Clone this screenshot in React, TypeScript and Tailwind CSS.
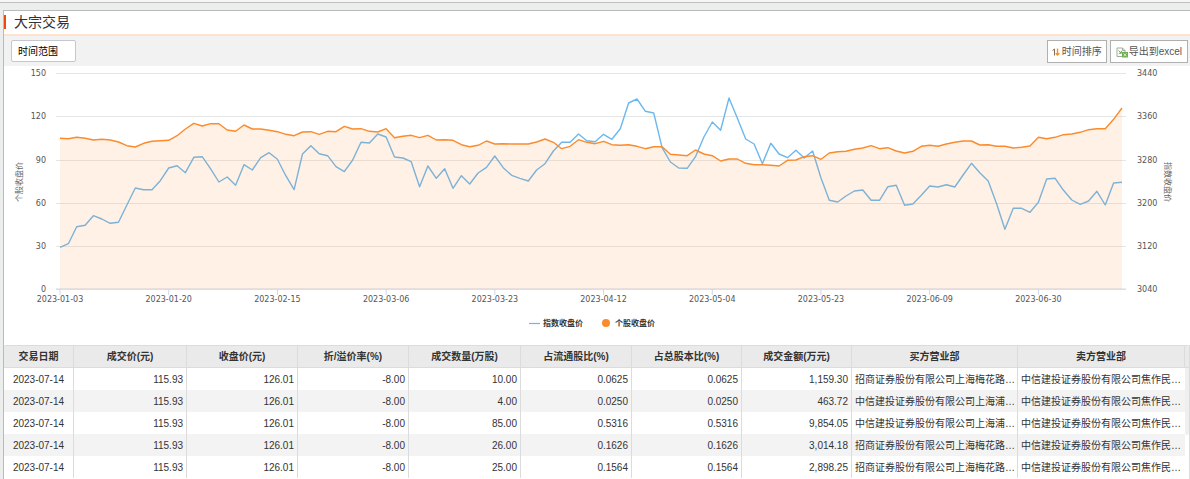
import React from "react";

type Trade = {
  date: string;
  price: string;
  close: string;
  premium: string;
  volume: string;
  floatRatio: string;
  totalRatio: string;
  amount: string;
  buyer: string;
  seller: string;
};

const MEIHUA = "招商证券股份有限公司上海梅花路…";
const PUDONG = "中信建投证券股份有限公司上海浦…";
const JIAOZUO = "中信建投证券股份有限公司焦作民…";

const base = { date: "2023-07-14", price: "115.93", close: "126.01", premium: "-8.00", seller: JIAOZUO };

const trades: Trade[] = [
  { ...base, volume: "10.00", floatRatio: "0.0625", totalRatio: "0.0625", amount: "1,159.30", buyer: MEIHUA },
  { ...base, volume: "4.00", floatRatio: "0.0250", totalRatio: "0.0250", amount: "463.72", buyer: PUDONG },
  { ...base, volume: "85.00", floatRatio: "0.5316", totalRatio: "0.5316", amount: "9,854.05", buyer: PUDONG },
  { ...base, volume: "26.00", floatRatio: "0.1626", totalRatio: "0.1626", amount: "3,014.18", buyer: MEIHUA },
  { ...base, volume: "25.00", floatRatio: "0.1564", totalRatio: "0.1564", amount: "2,898.25", buyer: MEIHUA },
];

const columns: { key: keyof Trade; title: string; width: string; align: string }[] = [
  { key: "date", title: "交易日期", width: "w-[70px]", align: "text-center" },
  { key: "price", title: "成交价(元)", width: "w-[113px]", align: "text-right" },
  { key: "close", title: "收盘价(元)", width: "w-[111px]", align: "text-right" },
  { key: "premium", title: "折/溢价率(%)", width: "w-[111px]", align: "text-right" },
  { key: "volume", title: "成交数量(万股)", width: "w-[112px]", align: "text-right" },
  { key: "floatRatio", title: "占流通股比(%)", width: "w-[111px]", align: "text-right" },
  { key: "totalRatio", title: "占总股本比(%)", width: "w-[110px]", align: "text-right" },
  { key: "amount", title: "成交金额(万元)", width: "w-[110px]", align: "text-right" },
  { key: "buyer", title: "买方营业部", width: "w-[166px]", align: "text-left" },
  { key: "seller", title: "卖方营业部", width: "w-[167px]", align: "text-left" },
];

// Series heights, measured downwards on the plot in thirds of a unit.
const stock = [
  145, 146, 142, 145, 150, 148, 150, 156, 167, 171, 160, 154, 152, 151, 137, 117, 100, 108, 101, 101, 120, 124, 105,
  117, 117, 121, 125, 133, 137, 126, 125, 133, 124, 125, 109, 117, 116, 124, 126, 116, 143, 139, 136, 143, 136, 150,
  149, 151, 164, 170, 166, 153, 162, 161, 162, 162, 162, 156, 147, 157, 176, 169, 149, 157, 161, 154, 164, 166, 164,
  169, 176, 170, 170, 193, 195, 197, 180, 192, 197, 213, 207, 207, 220, 224, 224, 226, 228, 211, 210, 200, 197, 208,
  189, 185, 184, 178, 174, 167, 176, 173, 183, 189, 184, 169, 166, 169, 162, 157, 153, 153, 165, 164, 169, 169, 174,
  172, 168, 142, 146, 142, 134, 132, 127, 119, 116, 116, 88, 54,
];
const index = [
  472, 461, 410, 406, 377, 387, 400, 397, 345, 294, 299, 299, 272, 234, 227, 248, 202, 200, 236, 276, 261, 286, 224,
  240, 203, 188, 208, 257, 299, 192, 167, 191, 197, 230, 245, 210, 157, 159, 132, 141, 201, 204, 215, 290, 228, 265,
  236, 295, 257, 282, 249, 232, 198, 233, 256, 265, 273, 240, 221, 183, 157, 157, 132, 152, 155, 133, 148, 116, 39,
  27, 64, 69, 173, 216, 234, 235, 200, 141, 96, 121, 24, 84, 147, 162, 221, 160, 192, 203, 181, 204, 183, 264, 331,
  336, 318, 303, 300, 331, 331, 290, 286, 346, 342, 316, 288, 291, 284, 291, 255, 220, 248, 273, 341, 418, 355, 355,
  367, 337, 267, 265, 301, 330, 343, 333, 304, 345, 279, 277,
];

const LEFT = 56;
const STEP = 1062 / 127;
const toPoints = (values: number[]) =>
  values.map((v, i) => `${(LEFT + i * STEP).toFixed(1)},${(24 + v / 3).toFixed(1)}`).join(" ");

const grid = [
  { y: 7, left: "150", right: "3440" },
  { y: 50, left: "120", right: "3360" },
  { y: 94, left: "90", right: "3280" },
  { y: 137, left: "60", right: "3200" },
  { y: 180, left: "30", right: "3120" },
  { y: 223, left: "0", right: "3040" },
];
const dates = [
  "2023-01-03", "2023-01-20", "2023-02-15", "2023-03-06", "2023-03-23",
  "2023-04-12", "2023-05-04", "2023-05-23", "2023-06-09", "2023-06-30",
];

function Chart() {
  const stockPoints = toPoints(stock);
  return (
    <svg
      viewBox="0 0 1186 279"
      className="block h-auto w-full font-['DejaVu_Sans','Noto_Sans_CJK_SC',sans-serif] text-[8px]"
      role="img"
      aria-label="个股收盘价 指数收盘价"
    >
      {grid.map((g) => (
        <line key={g.y} x1="52" x2="1122" y1={g.y + 0.5} y2={g.y + 0.5} stroke="#e6e6e6" />
      ))}
      {dates.map((d, i) => {
        const x = LEFT + i * 13 * STEP;
        return (
          <g key={d}>
            <line x1={x} x2={x} y1="223" y2="229" stroke="#ccd6eb" />
            <text x={x} y="236" textAnchor="middle" fill="#555">{d}</text>
          </g>
        );
      })}
      <line x1="52" x2="1122" y1="223" y2="223" stroke="#ccd6eb" />
      <polyline points={toPoints(index)} fill="none" stroke="#6cb8ee" strokeWidth="1.4" strokeLinejoin="round" />
      <polygon points={`56,223 ${stockPoints} 1118,223`} fill="#fb8b2c" fillOpacity="0.12" />
      <polyline points={stockPoints} fill="none" stroke="#fb8b2c" strokeWidth="1.4" strokeLinejoin="round" />
      {grid.map((g) => (
        <g key={g.left} fill="#555">
          <text x="42" y={g.y + 3} textAnchor="end">{g.left}</text>
          <text x="1133" y={g.y + 3}>{g.right}</text>
        </g>
      ))}
      <text transform="translate(18 116) rotate(-90)" textAnchor="middle" fill="#666">个股收盘价</text>
      <text transform="translate(1161 116) rotate(90)" textAnchor="middle" fill="#666">指数收盘价</text>
      <line x1="525" x2="536" y1="257.5" y2="257.5" stroke="#6cb8ee" strokeWidth="1.2" />
      <text x="539" y="260" fontWeight="bold" fill="#333">指数收盘价</text>
      <circle cx="602" cy="257" r="4" fill="#fb8b2c" />
      <text x="611" y="260" fontWeight="bold" fill="#333">个股收盘价</text>
    </svg>
  );
}

function SortIcon() {
  return (
    <svg viewBox="0 0 8 8" className="size-2" fill="none" aria-hidden="true">
      <path d="M0.5 2.5 2.5 1V7.5" stroke="#8b6a50" />
      <path d="M5.5 0.5V7M3.8 5.2 5.5 7 7.4 5.2" stroke="#f6931e" strokeWidth="1.4" />
    </svg>
  );
}

function ExcelIcon() {
  return (
    <svg viewBox="0 0 12 11" className="h-[11px] w-3" fill="none" aria-hidden="true">
      <path d="M6 9.5H1V1h5.5L9 3.5V5M6.5 1v2.5H9" stroke="#a3a9a0" />
      <path d="M2.5 3.5 5 6M5.3 3.8V6.3H2.8" stroke="#6aa84f" />
      <rect x="6" y="5" width="6" height="5.5" fill="#6eae50" />
      <path d="m7.5 6.3 3 3M10.5 6.3l-3 3" stroke="#e6f3df" strokeWidth="0.9" />
    </svg>
  );
}

export default function App() {
  return (
    <div className="flex min-h-screen flex-col overflow-hidden bg-[#eceeed] font-['Liberation_Sans','Noto_Sans_CJK_SC',sans-serif] text-[10px] text-[#333]">
      <div className="h-[3px] border-b border-[#bfbfbf] bg-[#f6f6f6]" />
      <main className="mt-[7px] ml-[3px] flex grow flex-col border-t border-l border-[#b9bbba] bg-white">
        <header className="flex h-[25px] items-center border-b-2 border-[#fde3cf] pb-0.5">
          <span className="h-3.5 w-0.5 bg-[#ee4a0a]" />
          <h1 className="ml-2 text-[14px] leading-5">大宗交易</h1>
        </header>
        <div className="flex h-[30px] items-center justify-between bg-[#f2f2f2] pr-0.5 pl-[7px]">
          <button className="h-[22px] w-[65px] rounded-xs border border-[#c6c6ce] bg-white pt-0.5 pl-1.5 text-left leading-4 text-black">
            时间范围
          </button>
          <div className="flex gap-[3px]">
            <button className="flex h-[23px] items-center gap-0.5 border border-[#b0b0b0] bg-white px-1 pt-0.5 leading-4 text-[#555]">
              <SortIcon />
              时间排序
            </button>
            <button className="flex h-[23px] items-center gap-px border border-[#b0b0b0] bg-white px-[5px] pt-0.5 leading-4 text-[#555]">
              <ExcelIcon />
              导出到excel
            </button>
          </div>
        </div>
        <Chart />
        <div className="flex grow">
          <div className="min-w-0 grow">
            <table className="w-full table-fixed border-separate border-spacing-0 whitespace-nowrap">
              <thead>
                <tr className="h-[23px] bg-[#eaeaea]">
                  {columns.map((c) => (
                    <th
                      key={c.key}
                      scope="col"
                      className={`${c.width} border-t border-r border-b border-[#dcdcdc] p-0 text-center leading-4 font-bold first:rounded-tl-xs`}
                    >
                      {c.title}
                    </th>
                  ))}
                </tr>
              </thead>
              <tbody>
                {trades.map((t, i) => (
                  <tr key={i} className="h-[22px] odd:bg-white even:bg-[#f3f3f3]">
                    {columns.map((c) => (
                      <td
                        key={c.key}
                        className={`${c.align} overflow-hidden border-r border-[#dcdcdc] px-[3px] pt-0.5 pb-0 leading-4 last:border-r-transparent`}
                      >
                        {t[c.key]}
                      </td>
                    ))}
                  </tr>
                ))}
              </tbody>
            </table>
          </div>
          <div className="w-[5px] shrink-0 border-r border-[#dcdcdc]">
            <div className="h-[23px] rounded-tr-xs border-t border-b border-[#dcdcdc] bg-[#eaeaea]" />
            <div className="h-[67px] rounded-b-xs bg-[#efefef]" />
          </div>
        </div>
      </main>
    </div>
  );
}
